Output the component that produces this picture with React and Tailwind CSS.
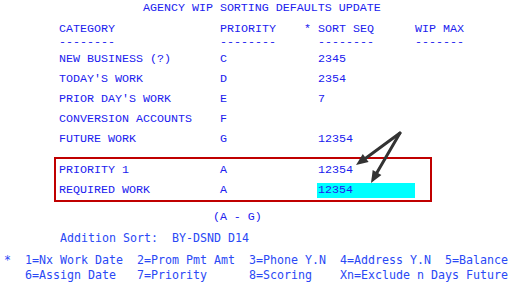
const rows = [
  { cat: 'NEW BUSINESS (?)', pri: 'C', seq: '2345' },
  { cat: "TODAY'S WORK", pri: 'D', seq: '2354' },
  { cat: "PRIOR DAY'S WORK", pri: 'E', seq: '7' },
  { cat: 'CONVERSION ACCOUNTS', pri: 'F', seq: '' },
  { cat: 'FUTURE WORK', pri: 'G', seq: '12354' },
]

function Row({ cat, pri, star = '', seq, wip = '', className = '', seqClass = '' }) {
  return (
    <div className={`flex h-[14px] leading-[14px] whitespace-pre ${className}`}>
      <span className="w-[161px] shrink-0">{cat}</span>
      <span className="w-[84px] shrink-0">{pri}</span>
      <span className="w-[13px] shrink-0">{star}</span>
      <span className={`w-[98px] shrink-0 pl-[1px] ${seqClass}`}>{seq}</span>
      <span>{wip}</span>
    </div>
  )
}

function Arrows() {
  return (
    <svg className="absolute inset-0 pointer-events-none" width="518" height="284">
      <g stroke="#333" strokeWidth="3" strokeLinecap="round">
        <line x1="400" y1="133" x2="366" y2="158" />
        <line x1="400" y1="133" x2="377" y2="172.6" />
      </g>
      <g fill="#333">
        <polygon points="356,165 368.6,162 362.8,153.9" />
        <polygon points="371,183 381.4,175.1 372.7,170.1" />
      </g>
    </svg>
  )
}

export default function App() {
  return (
    <div className="relative w-[518px] h-[284px] bg-white overflow-hidden">
      <div className="pl-[59px] text-[#2020ee] text-[11.67px]" style={{ fontFamily: '"Liberation Mono", monospace' }}>
        <div className="mt-[1px] h-[14px] leading-[14px] whitespace-pre">{'            AGENCY WIP SORTING DEFAULTS UPDATE'}</div>
        <Row cat="CATEGORY" pri="PRIORITY" star="*" seq="SORT SEQ" wip="WIP MAX" className="mt-[7px]" />
        <Row cat="--------" pri="--------" seq="--------" wip="-------" className="-mt-[1px]" />
        {rows.map((r, i) => (
          <Row key={r.cat} {...r} className={i === 0 ? 'mt-[3px]' : 'mt-[6px]'} />
        ))}
        <div className="mt-[11px] -ml-[5px] w-[378px] h-[45px] border-2 border-[#c00000] pl-[3px] pt-[4px]">
          <Row cat="PRIORITY 1" pri="A" seq="12354" />
          <Row cat="REQUIRED WORK" pri="A" seq="12354" className="mt-[6px]" seqClass="bg-[#00ffff] h-[15px]" />
        </div>
        <div className="mt-[8px] h-[14px] leading-[14px] whitespace-pre">{'                      (A - G)'}</div>
      </div>
      <div className="pl-[4px] text-[#2a49f5] text-[11.63px]" style={{ fontFamily: '"DejaVu Sans Mono", monospace' }}>
        <div className="mt-[7px] h-[14px] leading-[14px] whitespace-pre">{'        Addition Sort:  BY-DSND D14'}</div>
        <div className="mt-[8px] h-[14px] leading-[14px] whitespace-pre">{'*  1=Nx Work Date  2=Prom Pmt Amt  3=Phone Y.N  4=Address Y.N  5=Balance'}</div>
        <div className="mt-[1px] h-[14px] leading-[14px] whitespace-pre">{'   6=Assign Date   7=Priority      8=Scoring    Xn=Exclude n Days Future'}</div>
      </div>
      <Arrows />
    </div>
  )
}
